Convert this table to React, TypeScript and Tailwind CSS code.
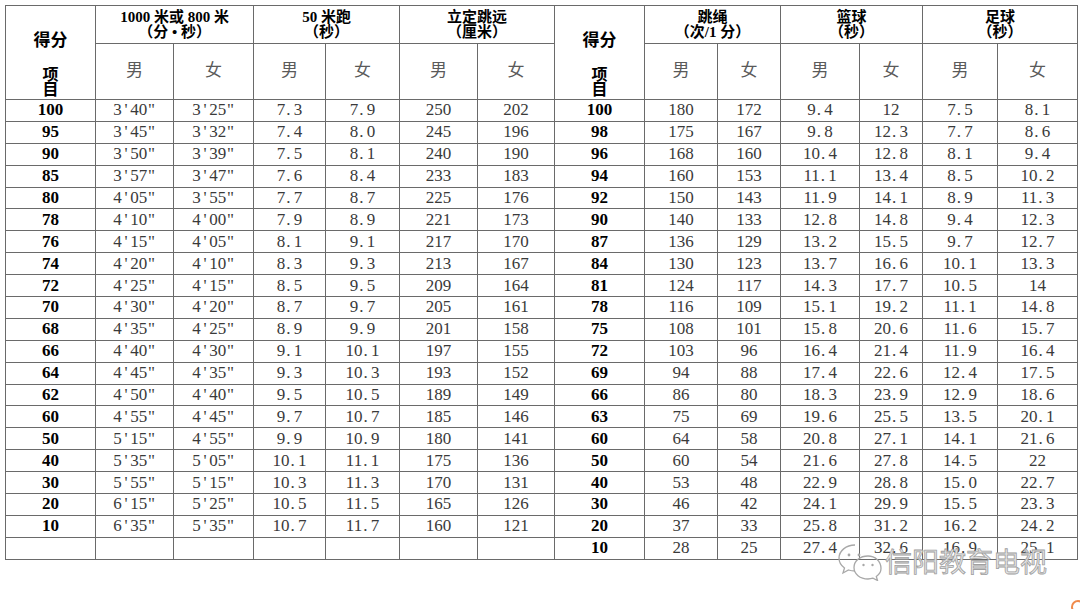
import React from "react";

const Q = '"';
const left: string[][] = [
  ["100", `3'40${Q}`, `3'25${Q}`, "7.3", "7.9", "250", "202"],
  ["95", `3'45${Q}`, `3'32${Q}`, "7.4", "8.0", "245", "196"],
  ["90", `3'50${Q}`, `3'39${Q}`, "7.5", "8.1", "240", "190"],
  ["85", `3'57${Q}`, `3'47${Q}`, "7.6", "8.4", "233", "183"],
  ["80", `4'05${Q}`, `3'55${Q}`, "7.7", "8.7", "225", "176"],
  ["78", `4'10${Q}`, `4'00${Q}`, "7.9", "8.9", "221", "173"],
  ["76", `4'15${Q}`, `4'05${Q}`, "8.1", "9.1", "217", "170"],
  ["74", `4'20${Q}`, `4'10${Q}`, "8.3", "9.3", "213", "167"],
  ["72", `4'25${Q}`, `4'15${Q}`, "8.5", "9.5", "209", "164"],
  ["70", `4'30${Q}`, `4'20${Q}`, "8.7", "9.7", "205", "161"],
  ["68", `4'35${Q}`, `4'25${Q}`, "8.9", "9.9", "201", "158"],
  ["66", `4'40${Q}`, `4'30${Q}`, "9.1", "10.1", "197", "155"],
  ["64", `4'45${Q}`, `4'35${Q}`, "9.3", "10.3", "193", "152"],
  ["62", `4'50${Q}`, `4'40${Q}`, "9.5", "10.5", "189", "149"],
  ["60", `4'55${Q}`, `4'45${Q}`, "9.7", "10.7", "185", "146"],
  ["50", `5'15${Q}`, `4'55${Q}`, "9.9", "10.9", "180", "141"],
  ["40", `5'35${Q}`, `5'05${Q}`, "10.1", "11.1", "175", "136"],
  ["30", `5'55${Q}`, `5'15${Q}`, "10.3", "11.3", "170", "131"],
  ["20", `6'15${Q}`, `5'25${Q}`, "10.5", "11.5", "165", "126"],
  ["10", `6'35${Q}`, `5'35${Q}`, "10.7", "11.7", "160", "121"],
  ["", "", "", "", "", "", ""],
];

const right: string[][] = [
  ["100", "180", "172", "9.4", "12", "7.5", "8.1"],
  ["98", "175", "167", "9.8", "12.3", "7.7", "8.6"],
  ["96", "168", "160", "10.4", "12.8", "8.1", "9.4"],
  ["94", "160", "153", "11.1", "13.4", "8.5", "10.2"],
  ["92", "150", "143", "11.9", "14.1", "8.9", "11.3"],
  ["90", "140", "133", "12.8", "14.8", "9.4", "12.3"],
  ["87", "136", "129", "13.2", "15.5", "9.7", "12.7"],
  ["84", "130", "123", "13.7", "16.6", "10.1", "13.3"],
  ["81", "124", "117", "14.3", "17.7", "10.5", "14"],
  ["78", "116", "109", "15.1", "19.2", "11.1", "14.8"],
  ["75", "108", "101", "15.8", "20.6", "11.6", "15.7"],
  ["72", "103", "96", "16.4", "21.4", "11.9", "16.4"],
  ["69", "94", "88", "17.4", "22.6", "12.4", "17.5"],
  ["66", "86", "80", "18.3", "23.9", "12.9", "18.6"],
  ["63", "75", "69", "19.6", "25.5", "13.5", "20.1"],
  ["60", "64", "58", "20.8", "27.1", "14.1", "21.6"],
  ["50", "60", "54", "21.6", "27.8", "14.5", "22"],
  ["40", "53", "48", "22.9", "28.8", "15.0", "22.7"],
  ["30", "46", "42", "24.1", "29.9", "15.5", "23.3"],
  ["20", "37", "33", "25.8", "31.2", "16.2", "24.2"],
  ["10", "28", "25", "27.4", "32.6", "16.9", "25.1"],
];

const widths = [90, 78, 80, 72, 74, 78, 77, 90, 73, 63, 79, 63, 75, 80];

function Num({ v }: { v: string }) {
  return (
    <>
      {v.split("").map((c, i) =>
        c === "." ? (
          <span key={i} className="inline-block w-[0.5em] text-left pl-[1px]">
            .
          </span>
        ) : c === "'" || c === '"' ? (
          <span key={i} className="inline-block w-[0.5em] text-center">
            {c}
          </span>
        ) : (
          <span key={i}>{c}</span>
        )
      )}
    </>
  );
}

const bd = "border border-[#6a6a6a]";

function ScoreHead() {
  return (
    <th rowSpan={2} className={`${bd} p-0 align-top`}>
      <div className="flex flex-col items-center font-bold text-black">
        <div className="mt-[26px] text-[17px] leading-[18px]">得分</div>
        <div className="mt-[17px] text-[16px] leading-[15px] flex flex-col items-center">
          <span>项</span>
          <span>目</span>
        </div>
      </div>
    </th>
  );
}

function GroupHead({ a, b }: { a: React.ReactNode; b: React.ReactNode }) {
  return (
    <th colSpan={2} className={`${bd} p-0 align-middle`}>
      <div className="flex flex-col items-center font-bold text-black text-[15px] leading-[15px]">
        <span className="whitespace-nowrap">{a}</span>
        <span className="whitespace-nowrap">{b}</span>
      </div>
    </th>
  );
}

function Sex({ t }: { t: string }) {
  return (
    <th className={`${bd} p-0 font-normal text-[17px] text-[#5a5a5a] align-middle pb-[2px]`}>{t}</th>
  );
}

export default function App() {
  return (
    <div
      className="relative w-[1080px] h-[609px] bg-white overflow-hidden"
      style={{ fontFamily: "'Liberation Serif', 'Noto Sans CJK SC', serif" }}
    >
      <div className="pt-[5px] pl-[5px]">
        <table className="table-fixed border-collapse w-[1073px]">
          <colgroup>
            {widths.map((w, i) => (
              <col key={i} style={{ width: w }} />
            ))}
          </colgroup>
          <thead>
            <tr className="h-[38px]">
              <ScoreHead />
              <GroupHead a="1000 米或 800 米" b="（分 • 秒）" />
              <GroupHead a="50 米跑" b="（秒）" />
              <GroupHead a="立定跳远" b="（厘米）" />
              <ScoreHead />
              <GroupHead a="跳绳" b="（次/1 分）" />
              <GroupHead a="篮球" b="（秒）" />
              <GroupHead a="足球" b="（秒）" />
            </tr>
            <tr className="h-[56px]">
              <Sex t="男" />
              <Sex t="女" />
              <Sex t="男" />
              <Sex t="女" />
              <Sex t="男" />
              <Sex t="女" />
              <Sex t="男" />
              <Sex t="女" />
              <Sex t="男" />
              <Sex t="女" />
              <Sex t="男" />
              <Sex t="女" />
            </tr>
          </thead>
          <tbody>
            {left.map((l, i) => {
              const r = right[i];
              return (
                <tr key={i} className="h-[21.9px]">
                  {[...l, ...r].map((v, j) => (
                    <td
                      key={j}
                      className={`${bd} p-0 text-center leading-[20px] whitespace-nowrap ${
                        j === 0 || j === 7
                          ? "font-bold text-black text-[17px]"
                          : "text-[#3a3a3a] text-[17px]"
                      }`}
                    >
                      <Num v={v} />
                    </td>
                  ))}
                </tr>
              );
            })}
          </tbody>
        </table>
      </div>

      {/* watermark */}
      <div className="absolute left-[836px] top-[541px] flex items-center pointer-events-none">
        <svg width="48" height="40" viewBox="0 0 48 40" fill="none" stroke="#a8a8a8" strokeWidth="1.3">
          <path d="M19 4C10 4 3 10 3 17c0 4 2 7.5 5.5 10L7 32l5.5-3c2 .6 4.3 1 6.5 1" />
          <circle cx="13" cy="14" r="1.4" fill="#a8a8a8" stroke="none" />
          <circle cx="23" cy="14" r="1.4" fill="#a8a8a8" stroke="none" />
          <path d="M32 15c-8 0-14 5-14 11.5S24 38 32 38c1.8 0 3.5-.3 5-.8l4.5 2.3-1.2-4c3-2.1 4.7-5 4.7-8C45 20 39 15 32 15z" />
          <circle cx="27.5" cy="24" r="1.2" fill="#a8a8a8" stroke="none" />
          <circle cx="36.5" cy="24" r="1.2" fill="#a8a8a8" stroke="none" />
        </svg>
        <span
          className="ml-[1px] text-[27px] leading-[30px] text-[#e6e6e6] [-webkit-text-stroke:0.8px_#a0a0a0]"
          style={{ fontFamily: "'Noto Sans CJK SC', sans-serif" }}
        >
          信阳教育电视
        </span>
      </div>

      <div className="absolute left-[1071px] top-[600px] w-[14px] h-[14px] rounded-full border-[2px] border-[#f08a4b]" />
    </div>
  );
}
